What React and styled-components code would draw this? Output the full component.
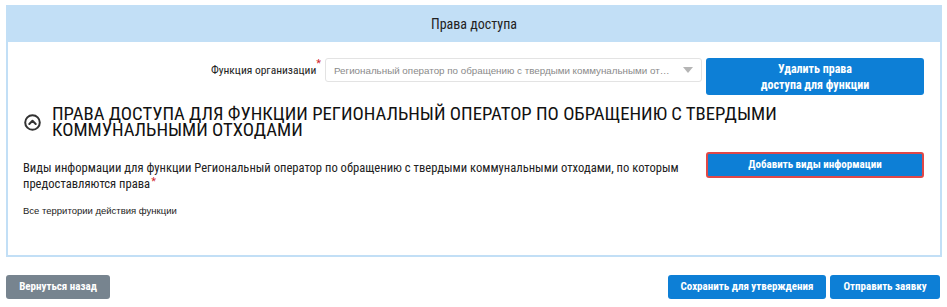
import React from 'react'
import styled, { createGlobalStyle } from 'styled-components'

const GlobalStyle = createGlobalStyle`
  body {
    margin: 0;
    background: #fff;
    font-family: "Roboto Condensed", Roboto, "Liberation Sans", sans-serif;
    color: #222;
  }
`

const Page = styled.div`
  width: 947px;
  padding: 5px 5px 0 6px;
  box-sizing: border-box;
`

const Panel = styled.section`
  border: 2px solid #c2dff6;
  border-top: 0;
  height: 252px;
  box-sizing: border-box;
`

const PanelHeader = styled.header`
  height: 37px;
  margin: 0 -2px;
  background: #c2dff6;
  display: flex;
  align-items: center;
  justify-content: center;
  font-size: 14px;
  color: #222;
`

const PanelBody = styled.div`
  padding: 16px 16px 0 15px;
`

const FunctionRow = styled.div`
  display: flex;
  justify-content: flex-end;
  align-items: flex-start;
  gap: 4px;
`

const FieldLabel = styled.label`
  font-size: 11.5px;
  line-height: 24px;
  color: #222;
`

const Required = styled.sup`
  color: #d0262d;
  font-size: 11px;
  vertical-align: top;
  line-height: 12px;
  margin-left: ${p => p.gap || 0}px;
`

const Select = styled.div`
  width: 377px;
  height: 24px;
  box-sizing: border-box;
  border: 1px solid #e3e3e3;
  border-radius: 3px;
  display: flex;
  align-items: center;
  padding: 0 8px;
  font-family: "Liberation Sans", Arial, sans-serif;
  font-size: 9.8px;
  color: #8a8a8a;
`

const SelectValue = styled.span`
  flex: 1;
  white-space: nowrap;
  overflow: hidden;
  text-overflow: ellipsis;
  padding-right: 10px;
`

const Caret = styled.span`
  width: 0;
  height: 0;
  border-left: 5px solid transparent;
  border-right: 5px solid transparent;
  border-top: 6px solid #b5b5b5;
`

const Button = styled.button`
  border: 0;
  border-radius: 3px;
  background: ${p => (p.gray ? '#77848f' : '#0d7fd6')};
  color: #fff;
  font-family: "Roboto Condensed", Roboto, sans-serif;
  font-weight: 700;
  font-size: ${p => p.size || 11}px;
  line-height: ${p => p.lh || 14}px;
  width: ${p => p.w}px;
  height: ${p => p.h}px;
  margin-top: ${p => p.shift || 0}px;
  padding: 0;
  cursor: pointer;
  box-sizing: border-box;
  flex-shrink: 0;
  ${p => p.focused && 'border: 2px solid #e04848;'}
`

const TitleRow = styled.div`
  display: flex;
  align-items: center;
  gap: 11px;
  margin-top: 11px;
  padding-left: 1px;
`

const Title = styled.h2`
  margin: 0;
  font-weight: 400;
  font-size: 18.7px;
  line-height: 16px;
  color: #111;
  text-transform: uppercase;
`

const InfoRow = styled.div`
  display: flex;
  justify-content: space-between;
  align-items: flex-start;
  margin-top: 22px;
`

const InfoText = styled.p`
  margin: 0;
  font-size: 12.6px;
  line-height: 16px;
  width: 665px;
  color: #222;
`

const Note = styled.p`
  margin: 13px 0 0;
  font-family: "Liberation Sans", Arial, sans-serif;
  font-size: 9.5px;
  color: #222;
`

const Footer = styled.footer`
  display: flex;
  align-items: center;
  gap: 4px;
  margin-top: 18px;
  padding-right: 2px;
`

const Spacer = styled.div`
  flex: 1;
`

const CollapseIcon = () => (
  <svg width="17" height="17" viewBox="0 0 17 17">
    <circle cx="8.5" cy="8.5" r="7.3" fill="none" stroke="#333" strokeWidth="2" />
    <path d="M5.3 10 L8.5 6.8 L11.7 10" fill="none" stroke="#333" strokeWidth="2" strokeLinecap="round" strokeLinejoin="round" />
  </svg>
)

export default function App() {
  return (
    <>
      <GlobalStyle />
      <Page>
        <Panel>
          <PanelHeader>Права доступа</PanelHeader>
          <PanelBody>
            <FunctionRow>
              <FieldLabel>
                Функция организации<Required>*</Required>
              </FieldLabel>
              <Select>
                <SelectValue>
                  Региональный оператор по обращению с твердыми коммунальными отходами
                </SelectValue>
                <Caret />
              </Select>
              <Button w={218} h={37} size={12} lh={16}>
                Удалить права
                <br />
                доступа для функции
              </Button>
            </FunctionRow>

            <TitleRow>
              <CollapseIcon />
              <Title>
                Права доступа для функции Региональный оператор по обращению с твердыми
                <br />
                коммунальными отходами
              </Title>
            </TitleRow>

            <InfoRow>
              <div>
                <InfoText>
                  Виды информации для функции Региональный оператор по обращению с твердыми
                  коммунальными отходами, по которым предоставляются права
                  <Required gap={1}>*</Required>
                </InfoText>
                <Note>Все территории действия функции</Note>
              </div>
              <Button w={218} h={26} shift={-8} focused>
                Добавить виды информации
              </Button>
            </InfoRow>
          </PanelBody>
        </Panel>

        <Footer>
          <Button gray w={104} h={24}>
            Вернуться назад
          </Button>
          <Spacer />
          <Button w={158} h={24}>
            Сохранить для утверждения
          </Button>
          <Button w={110} h={24}>
            Отправить заявку
          </Button>
        </Footer>
      </Page>
    </>
  )
}
